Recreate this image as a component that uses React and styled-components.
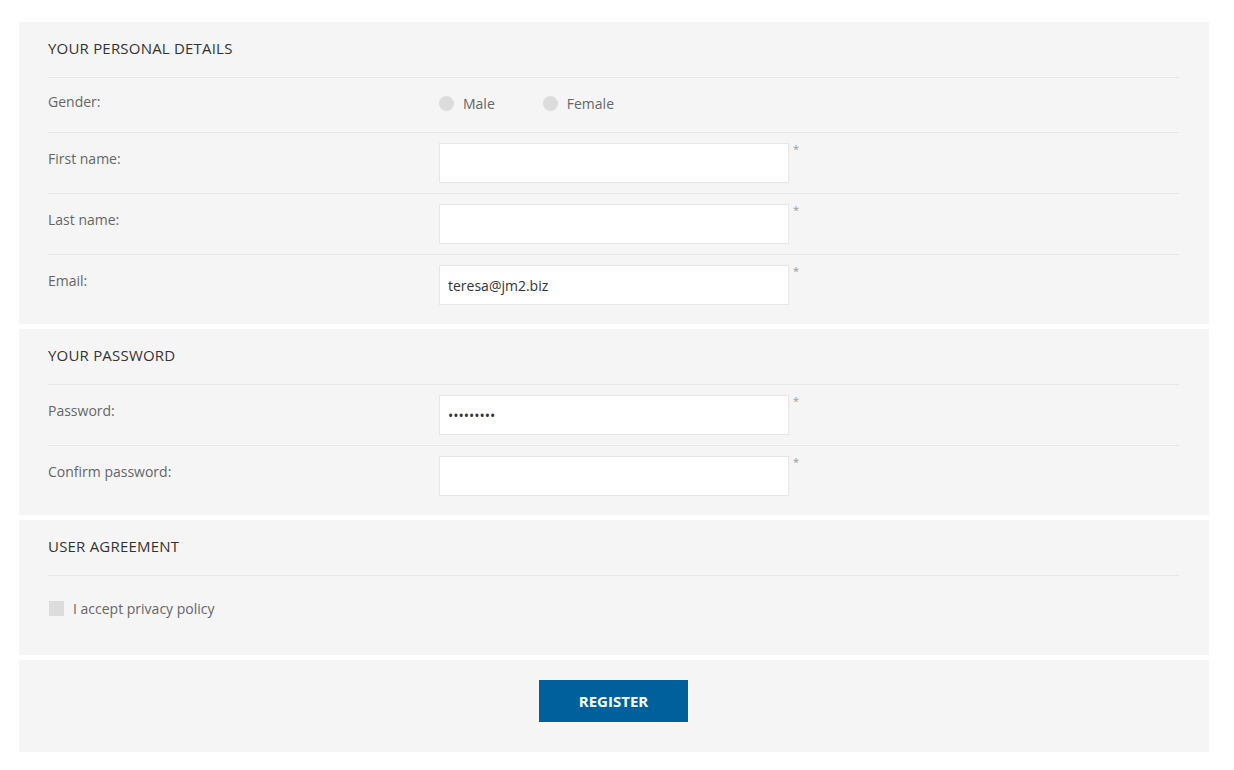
import React from 'react'
import styled, { createGlobalStyle } from 'styled-components'

const GlobalStyle = createGlobalStyle`
  body {
    margin: 0;
    background: #fff;
    font-family: "Open Sans", "Liberation Sans", sans-serif;
  }
`

const Page = styled.div`
  padding: 22px 25px 18px 19px;
  display: flex;
  flex-direction: column;
  gap: 5px;
  width: 1190px;
`
const Panel = styled.section`
  background: #f5f5f5;
  padding: 0 30px ${p => p.$bottom ?? 8}px 29px;
`
const Title = styled.h2`
  margin: 0;
  height: 56px;
  box-sizing: border-box;
  padding-bottom: 4px;
  display: flex;
  align-items: center;
  font-size: 15px;
  font-weight: 400;
  color: #333;
  letter-spacing: 0.2px;
  border-bottom: 1px solid #e6e6e6;
`
const Row = styled.div`
  display: flex;
  align-items: flex-start;
  height: ${p => p.$h || 61}px;
  border-bottom: ${p => (p.$last ? 'none' : '1px solid #e6e6e6')};
  box-sizing: border-box;
`
const Label = styled.label`
  width: 391px;
  flex: none;
  padding-top: ${p => p.$top || 16}px;
  font-size: 14px;
  color: #666;
`
const Field = styled.div`
  display: flex;
  align-items: flex-start;
  padding-top: 10px;
`
const Input = styled.input`
  width: 350px;
  height: 40px;
  box-sizing: border-box;
  border: 1px solid #e6e6e6;
  background: #fff;
  padding: 0 8px;
  font-family: inherit;
  font-size: 14px;
  color: #333;
  outline: none;
`
const Star = styled.span`
  margin-left: 4px;
  font-size: 11px;
  color: #999;
  line-height: 1;
`
const Radios = styled.div`
  display: flex;
  gap: 48px;
  padding-top: 16px;
`
const Radio = styled.span`
  display: flex;
  align-items: center;
  gap: 9px;
  font-size: 14px;
  color: #666;
  &::before {
    content: '';
    width: 15px;
    height: 15px;
    border-radius: 50%;
    background: #dcdcdc;
  }
`
const Check = styled.div`
  display: flex;
  align-items: center;
  gap: 9px;
  margin: 24px 1px 39px;
  height: 16px;
  font-size: 14px;
  color: #666;
  &::before {
    content: '';
    width: 15px;
    height: 15px;
    background: #dcdcdc;
  }
`
const Actions = styled.div`
  display: flex;
  justify-content: center;
  padding: 20px 0 30px;
`
const Button = styled.button`
  width: 149px;
  height: 42px;
  border: none;
  background: #00609c;
  color: #fff;
  font-family: inherit;
  font-weight: 700;
  font-size: 15px;
`

const TextRow = ({ label, type = 'text', value, last }) => (
  <Row $last={last}>
    <Label>{label}</Label>
    <Field>
      <Input type={type} defaultValue={value} />
      <Star>*</Star>
    </Field>
  </Row>
)

export default function App() {
  return (
    <>
      <GlobalStyle />
      <Page>
        <Panel>
          <Title>YOUR PERSONAL DETAILS</Title>
          <Row $h={55}>
            <Label $top={14}>Gender:</Label>
            <Radios>
              <Radio>Male</Radio>
              <Radio>Female</Radio>
            </Radios>
          </Row>
          <TextRow label="First name:" />
          <TextRow label="Last name:" />
          <TextRow label="Email:" value="teresa@jm2.biz" last />
        </Panel>
        <Panel>
          <Title>YOUR PASSWORD</Title>
          <TextRow label="Password:" type="password" value="123456789" />
          <TextRow label="Confirm password:" type="password" last />
        </Panel>
        <Panel $bottom={0}>
          <Title>USER AGREEMENT</Title>
          <Check>I accept privacy policy</Check>
        </Panel>
        <Panel $bottom={0}>
          <Actions>
            <Button>REGISTER</Button>
          </Actions>
        </Panel>
      </Page>
    </>
  )
}
